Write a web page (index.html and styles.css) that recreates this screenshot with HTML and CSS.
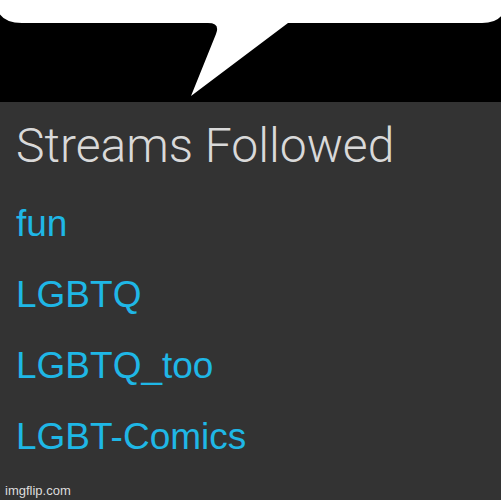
FILE: index.html
```html
<!DOCTYPE html>
<html lang="en">
<head>
    <meta charset="UTF-8">
    <meta name="viewport" content="width=device-width, initial-scale=1.0">
    <title>Streams Followed</title>
    <link rel="stylesheet" href="styles.css">
</head>
<body>

    <div class="bubble-area">
        <!-- speech bubble edge with its tail -->
        <svg class="bubble" width="501" height="102" viewBox="0 0 501 102">
            <path d="M -4 -10 H 506 V 0 Q 506 23 482 23 H 288 L 191 96 L 216 34 Q 220.4 23 208 23 H 22 Q -4 23 -4 0 Z" fill="#fff"/>
        </svg>
    </div>

    <div class="panel">
        <h2 class="title">Streams Followed</h2>
        <ul class="streams">
            <li>fun</li>
            <li>LGBTQ</li>
            <li>LGBTQ_too</li>
            <li>LGBT-Comics</li>
        </ul>
        <div class="watermark">imgflip.com</div>
    </div>

</body>
</html>
```

FILE: styles.css
```css
body {
    margin: 0;
    width: 501px;
    height: 500px;
    overflow: hidden;
    background-color: #333;
    font-family: "Liberation Sans", Arial, sans-serif;
}
.bubble-area {
    height: 102px;
    background: #000;
}
.bubble {
    display: block;
}
.panel {
    position: relative;
    height: 398px;
    background: #333;
    padding-left: 16px;
}
.title {
    margin: 0;
    padding-top: 16px;
    font-family: Roboto, "Liberation Sans", sans-serif;
    font-weight: 300;
    font-size: 48px;
    line-height: 56px;
    color: #d9d9d9;
}
.streams {
    list-style: none;
    margin: 0;
    padding: 0;
    padding-top: 14px;
}
.streams li {
    font-size: 37px;
    line-height: 71px;
    color: #1fb7e6;
}
.watermark {
    position: absolute;
    left: 5px;
    bottom: 2px;
    font-size: 13px;
    color: #ddd;
}
```
